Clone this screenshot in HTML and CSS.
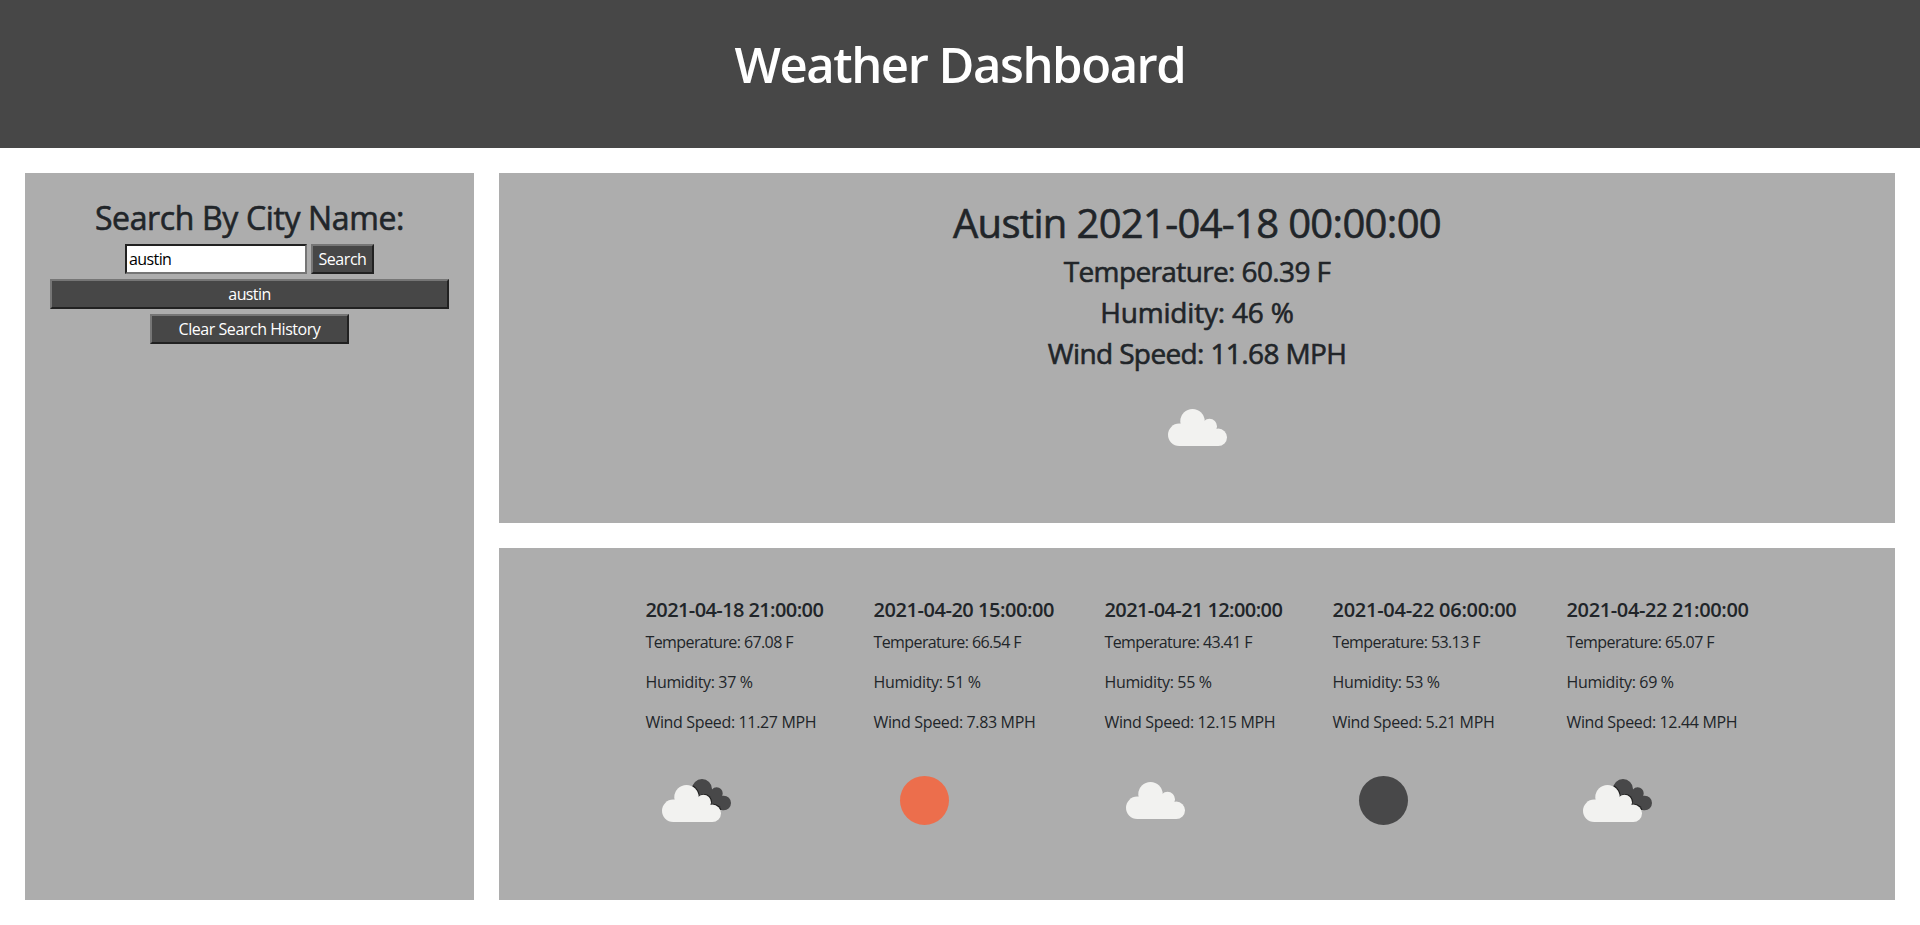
FILE: index.html
```
<!DOCTYPE html>
<html lang="en">
<head>
<meta charset="utf-8">
<title>Weather Dashboard</title>
<link rel="stylesheet" href="styles.css">
</head>
<body>
<svg class="defs" width="0" height="0" aria-hidden="true">
  <defs>
    <g id="cloud">
      <circle cx="32.2" cy="57.8" r="11.2"/>
      <circle cx="45.5" cy="44.2" r="12.2"/>
      <circle cx="62.5" cy="49.3" r="7.5"/>
      <circle cx="71.3" cy="60.3" r="8.7"/>
      <path d="M32 69V50H62L71.3 56V69Z"/>
    </g>
    <clipPath id="back">
      <circle cx="56" cy="39" r="10"/>
      <circle cx="70.7" cy="43.3" r="6"/>
      <circle cx="77.7" cy="53" r="7.3"/>
      <path d="M56 40H71L78 50V60H56Z"/>
    </clipPath>
    <g id="broken-clouds">
      <g clip-path="url(#back)">
        <rect width="100" height="100" fill="#484849"/>
        <use href="#cloud" x="-4.2" y="2.2" fill="#1c1c1c"/>
      </g>
      <use href="#cloud" x="-5" y="3" fill="#f2f2f0"/>
    </g>
  </defs>
</svg>
<header class="banner"><h1>Weather Dashboard</h1></header>
<main class="layout">
  <aside class="panel search">
    <h2>Search By City Name:</h2>
    <div class="search-row"><input class="city" type="text" value="austin"><button class="btn btn-search">Search</button></div>
    <button class="btn btn-wide">austin</button>
    <button class="btn btn-clear">Clear Search History</button>
  </aside>
  <section class="panel current">
    <h2>Austin 2021-04-18 00:00:00</h2>
    <h3>Temperature: 60.39 F</h3>
    <h3 class="humidity">Humidity: 46 %</h3>
    <h3>Wind Speed: 11.68 MPH</h3>
    <svg class="icon" viewBox="0 0 100 100"><use href="#cloud" fill="#f2f2f0"/></svg>
  </section>
  <section class="panel forecast">
    <article class="day"><h5>2021-04-18 21:00:00</h5><p>Temperature: 67.08 F</p><p>Humidity: 37 %</p><p>Wind Speed: 11.27 MPH</p><svg class="icon" viewBox="0 0 100 100"><use href="#broken-clouds"/></svg></article>
    <article class="day"><h5>2021-04-20 15:00:00</h5><p>Temperature: 66.54 F</p><p>Humidity: 51 %</p><p>Wind Speed: 7.83 MPH</p><svg class="icon" viewBox="0 0 100 100"><circle cx="50.5" cy="50.4" r="24.5" fill="#ec6e4c"/></svg></article>
    <article class="day"><h5>2021-04-21 12:00:00</h5><p>Temperature: 43.41 F</p><p>Humidity: 55 %</p><p>Wind Speed: 12.15 MPH</p><svg class="icon" viewBox="0 0 100 100"><use href="#cloud" fill="#f2f2f0"/></svg></article>
    <article class="day"><h5>2021-04-22 06:00:00</h5><p>Temperature: 53.13 F</p><p>Humidity: 53 %</p><p>Wind Speed: 5.21 MPH</p><svg class="icon" viewBox="0 0 100 100"><circle cx="50.5" cy="50.4" r="24.5" fill="#484849"/></svg></article>
    <article class="day"><h5>2021-04-22 21:00:00</h5><p>Temperature: 65.07 F</p><p>Humidity: 69 %</p><p>Wind Speed: 12.44 MPH</p><svg class="icon" viewBox="0 0 100 100"><use href="#broken-clouds"/></svg></article>
  </section>
</main>
</body>
</html>
```
FILE: styles.css
```
* { box-sizing: border-box; }
body {
  margin: 0;
  background: #fff;
  color: #212529;
  font-family: "Open Sans", "Noto Sans", sans-serif;
  font-size: 16px;
}
h1, h2, h3, h5, p { margin: 0; font-weight: 400; white-space: nowrap; }
.defs { display: block; height: 0; }
.banner {
  height: 148px;
  padding-top: 34px;
  background: #474747;
  color: #fff;
  text-align: center;
}
.banner h1 { font-size: 49px; line-height: 60px; font-weight: 600; letter-spacing: -1.45px; }
.layout {
  display: grid;
  grid-template-columns: 449px 1396px;
  grid-template-rows: 350px 352px;
  gap: 25px;
  padding: 25px;
}
.panel { background: #adadad; }
.search {
  grid-row: 1 / 3;
  display: flex;
  flex-direction: column;
  align-items: center;
  gap: 5px;
  padding: 25px;
}
.search h2, .current h2, .current h3 { -webkit-text-stroke: 0.6px #212529; }
.search h2 { font-size: 32px; line-height: 40px; margin-bottom: 1px; letter-spacing: -0.37px; }
.search-row { display: flex; gap: 4px; }
.city {
  width: 182px;
  height: 30px;
  padding: 1px 2px;
  border: 2px solid;
  border-color: #212121 #767676 #767676 #212121;
  background: #fff;
  color: #000;
  font: inherit;
  letter-spacing: -0.6px;
}
.btn {
  width: 63px;
  height: 30px;
  padding: 0;
  border: 2px solid;
  border-color: #767676 #212121 #212121 #767676;
  background: #474747;
  color: #fff;
  font: inherit;
  line-height: 24px;
  letter-spacing: -0.45px;
}
.btn-wide { width: 399px; letter-spacing: -0.6px; }
.btn-clear { width: 199px; }
.current {
  display: flex;
  flex-direction: column;
  align-items: center;
  padding-top: 26px;
}
.current h2 { font-size: 40px; line-height: 48px; margin-bottom: 4px; letter-spacing: -0.67px; }
.current h3 { font-size: 28px; line-height: 41px; letter-spacing: -0.62px; }
.current .humidity { letter-spacing: -0.2px; }
.icon { display: block; width: 100px; height: 100px; }
.current .icon { margin-top: 3px; }
.forecast {
  display: grid;
  grid-template-columns: 178px 181px 178px 184px 182px;
  column-gap: 50px;
  justify-content: center;
  padding-top: 50px;
}
.day h5 { font-size: 20px; line-height: 24px; margin-bottom: 8px; font-weight: 600; letter-spacing: -0.6px; }
.day:nth-child(2) h5 { letter-spacing: -0.45px; }
.day:nth-child(4) h5 { letter-spacing: -0.27px; }
.day:nth-child(5) h5 { letter-spacing: -0.37px; }
.day p { line-height: 24px; margin-bottom: 16px; letter-spacing: -0.35px; }
.day h5 + p { letter-spacing: -0.6px; }
```
